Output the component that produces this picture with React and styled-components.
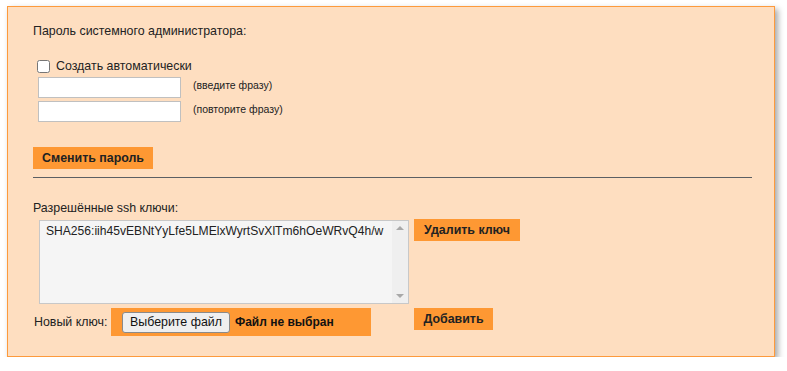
import React from "react";
import styled, { createGlobalStyle } from "styled-components";

const GlobalStyle = createGlobalStyle`
  body {
    margin: 0;
    background: #ffffff;
    font-family: "Liberation Sans", Arial, sans-serif;
    font-size: 12.4px;
    color: #222;
  }
`;

const Panel = styled.div`
  box-sizing: border-box;
  width: 768px;
  height: 351px;
  margin: 6px 0 0 7px;
  padding: 17px 22px 0 25px;
  background: #fedec0;
  border: 1px solid #fd9a3c;
  box-shadow: 3px 3px 6px rgba(0, 0, 0, 0.35);
`;

const Title = styled.div`
  line-height: 15px;
`;

const CheckRow = styled.label`
  display: flex;
  align-items: center;
  margin-top: 19px;
  height: 17px;
  line-height: 15px;
`;

const Check = styled.input`
  width: 13px;
  height: 13px;
  margin: 0 6px 0 4px;
`;

const PassRow = styled.div`
  display: flex;
  align-items: center;
  margin: ${(p) => (p.first ? "2px" : "3px")} 0 0 5px;
`;

const PassInput = styled.input`
  box-sizing: border-box;
  width: 143px;
  height: 21px;
  border: 1px solid #c0c0c0;
  background: #fff;
  padding: 0 3px;
`;

const Hint = styled.span`
  margin: -6px 0 0 12px;
  font-size: 10.5px;
  color: #222;
`;

const Button = styled.button`
  box-sizing: border-box;
  display: block;
  width: ${(p) => p.w}px;
  height: 22px;
  padding: 0;
  border: none;
  background: #fe9833;
  font-family: "Liberation Sans", Arial, sans-serif;
  font-size: 12.4px;
  font-weight: bold;
  color: #222;
  white-space: nowrap;
  cursor: pointer;
`;

const ChangeButton = styled(Button)`
  margin-top: 25px;
`;

const Divider = styled.hr`
  margin: 8px 0 0;
  border: none;
  border-top: 1px solid #5b5f63;
  height: 0;
`;

const SectionLabel = styled.div`
  margin-top: 23px;
  line-height: 15px;
`;

const KeysGrid = styled.div`
  display: grid;
  grid-template-columns: 381px auto;
  row-gap: 4px;
  margin-top: 3px;
  align-items: start;
`;

const KeyBox = styled.div`
  box-sizing: border-box;
  display: flex;
  width: 370px;
  height: 84px;
  margin: 1px 0 0 6px;
  border: 1px solid #c8c8c8;
  background: #f5f5f5;
`;

const KeyText = styled.div`
  flex: 1;
  padding: 3px 6px;
  font-size: 12.1px;
  line-height: 15px;
  white-space: nowrap;
  overflow: hidden;
`;

const ScrollTrack = styled.div`
  width: 16px;
  background: #efefef;
  display: flex;
  flex-direction: column;
  justify-content: space-between;
  align-items: center;
  padding: 5px 0;
`;

const Arrow = styled.span`
  width: 0;
  height: 0;
  border-left: 4px solid transparent;
  border-right: 4px solid transparent;
  ${(p) =>
    p.down
      ? "border-top: 4px solid #a8a8a8;"
      : "border-bottom: 4px solid #a8a8a8;"}
`;

const NewKeyRow = styled.div`
  display: flex;
  align-items: center;
  margin-left: 1px;
`;

const NewKeyLabel = styled.span`
  width: 77px;
`;

const FileArea = styled.div`
  box-sizing: border-box;
  display: flex;
  align-items: center;
  width: 260px;
  height: 28px;
  padding: 0 11px;
  background: #fe9833;
`;

const FileButton = styled.span`
  box-sizing: border-box;
  display: inline-flex;
  align-items: center;
  height: 21px;
  padding: 0 7px;
  border: 1px solid #8a8a8a;
  border-radius: 3px;
  background: #efefef;
  color: #111;
`;

const FileName = styled.span`
  margin-left: 5px;
  font-size: 12px;
  font-weight: bold;
  color: #111;
`;

export default function App() {
  return (
    <>
      <GlobalStyle />
      <Panel>
        <Title>Пароль системного администратора:</Title>
        <CheckRow>
          <Check type="checkbox" />
          Создать автоматически
        </CheckRow>
        <PassRow first>
          <PassInput type="password" />
          <Hint>(введите фразу)</Hint>
        </PassRow>
        <PassRow>
          <PassInput type="password" />
          <Hint>(повторите фразу)</Hint>
        </PassRow>
        <ChangeButton w={120}>Сменить пароль</ChangeButton>
        <Divider />
        <SectionLabel>Разрешённые ssh ключи:</SectionLabel>
        <KeysGrid>
          <KeyBox>
            <KeyText>SHA256:iih45vEBNtYyLfe5LMElxWyrtSvXlTm6hOeWRvQ4h/w</KeyText>
            <ScrollTrack>
              <Arrow />
              <Arrow down />
            </ScrollTrack>
          </KeyBox>
          <Button w={106}>Удалить ключ</Button>
          <NewKeyRow>
            <NewKeyLabel>Новый ключ:</NewKeyLabel>
            <FileArea>
              <FileButton>Выберите файл</FileButton>
              <FileName>Файл не выбран</FileName>
            </FileArea>
          </NewKeyRow>
          <Button w={79}>Добавить</Button>
        </KeysGrid>
      </Panel>
    </>
  );
}
